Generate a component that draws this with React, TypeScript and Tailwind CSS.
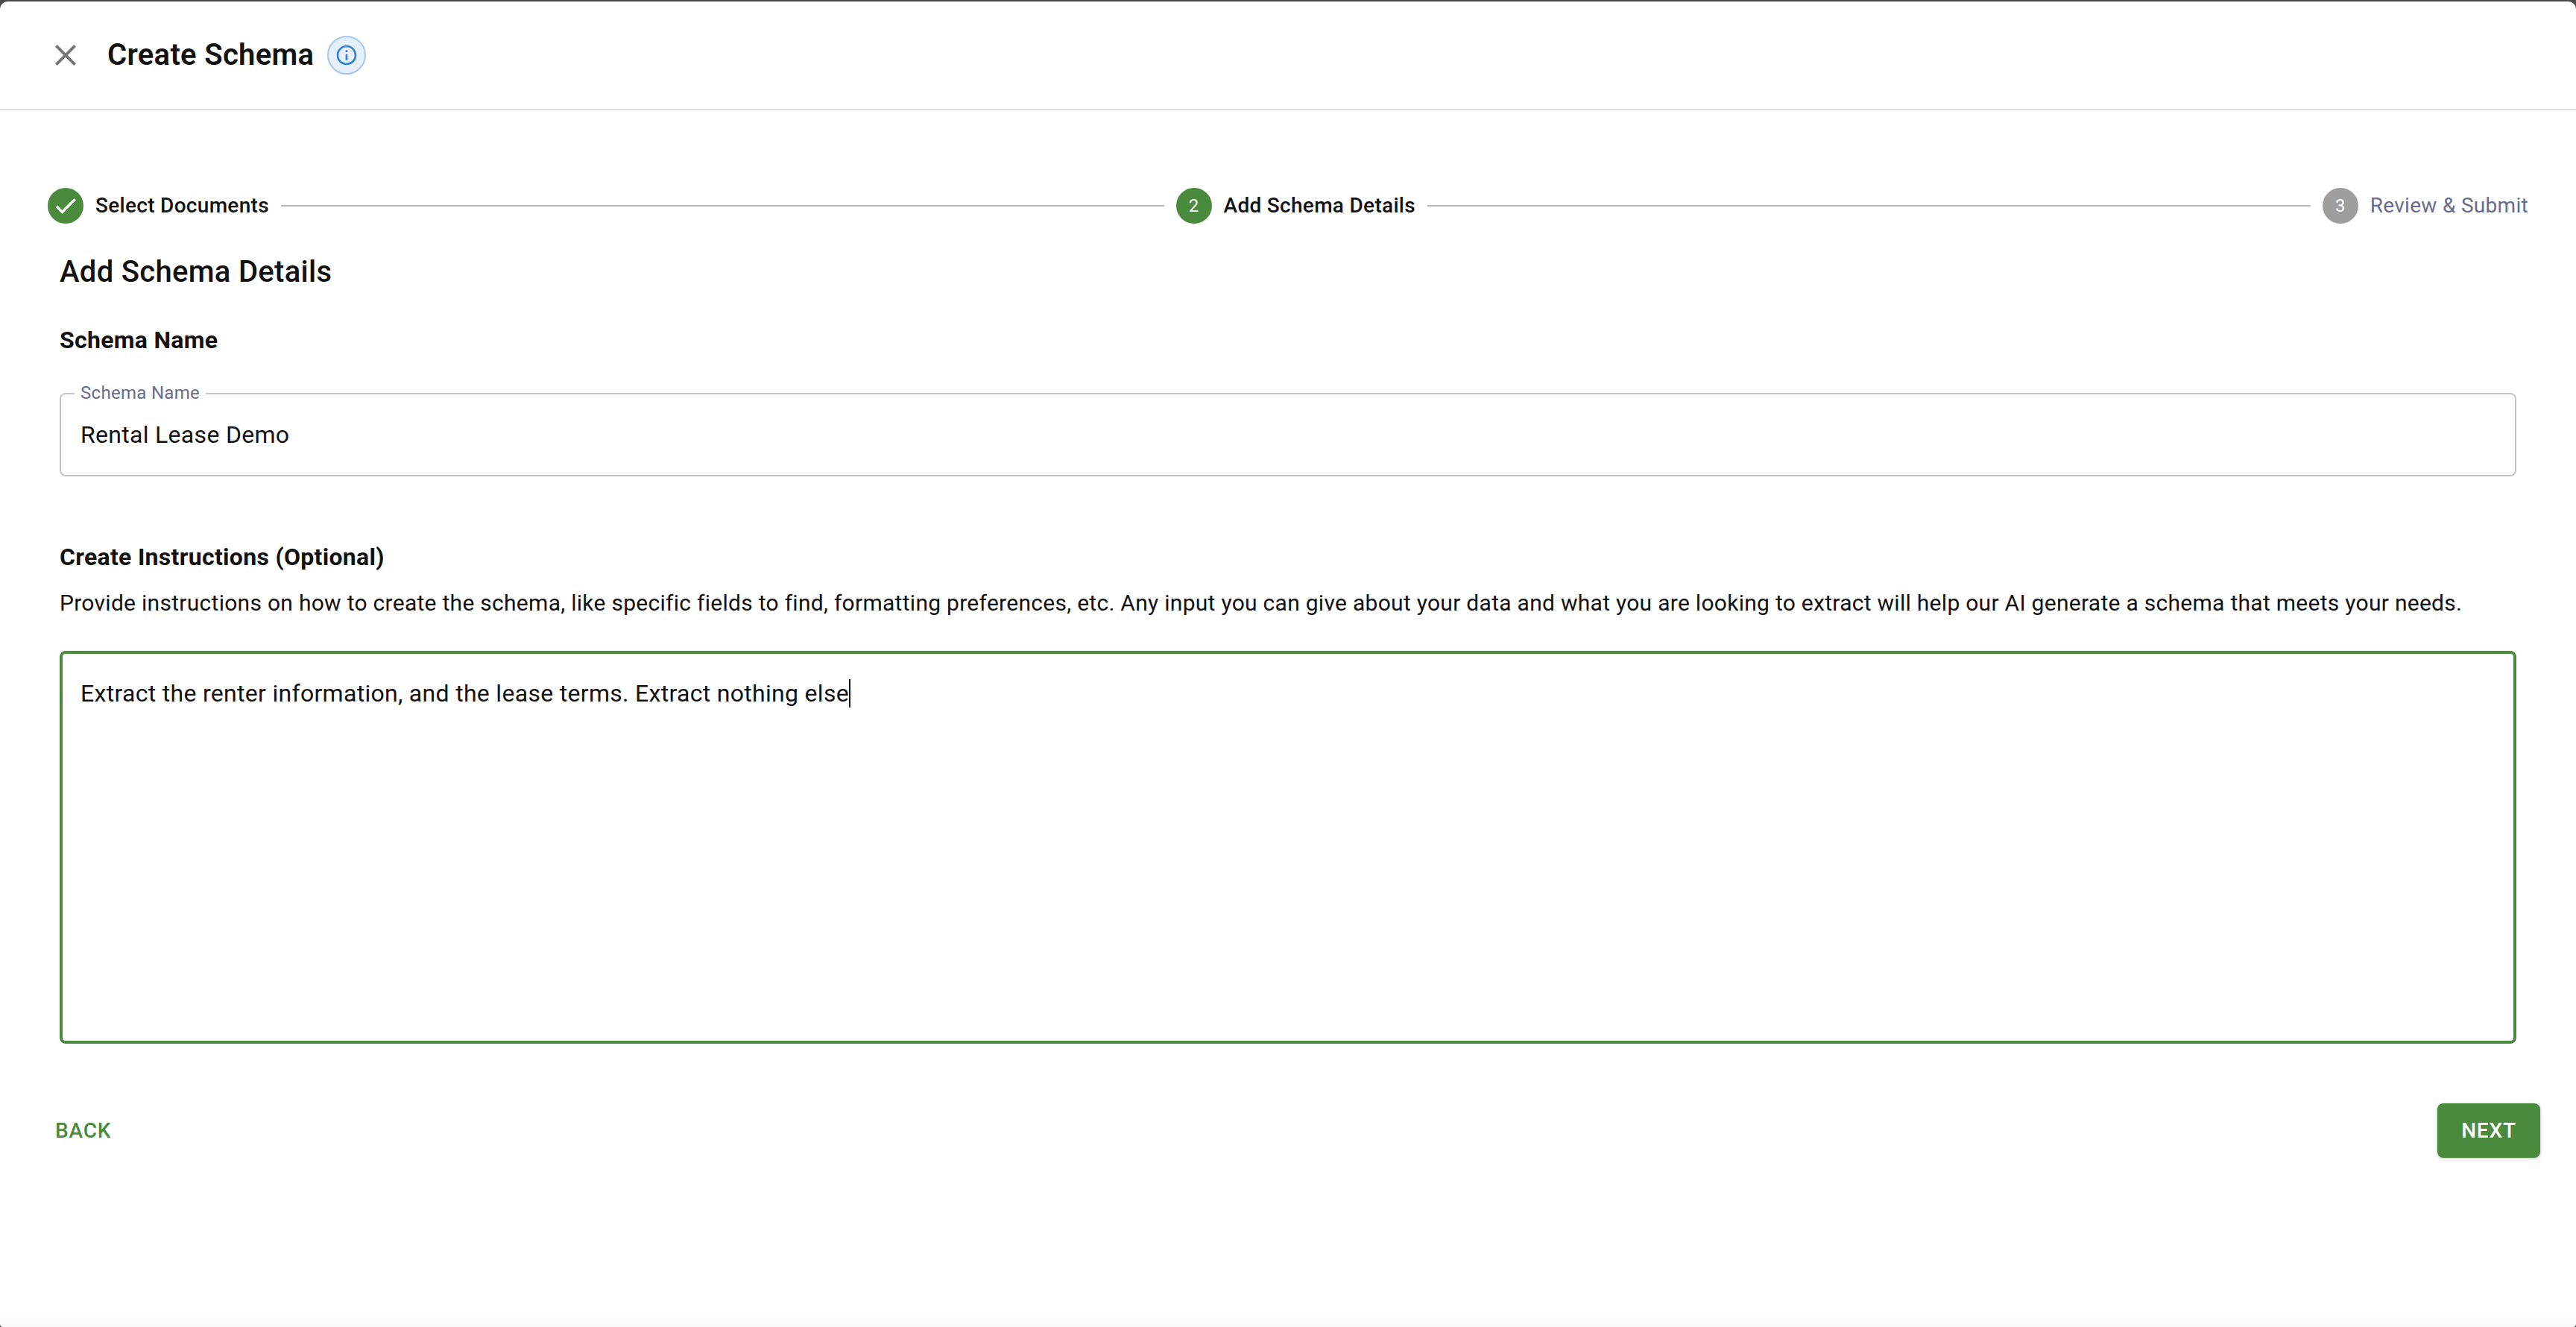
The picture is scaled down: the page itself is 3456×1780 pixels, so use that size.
const STEP_LINE = 'h-[2px] flex-1 bg-[#b8b8b8] mx-[16px]';

function StepLabel({ children, muted }: { children: string; muted?: boolean }) {
  return (
    <span className={`ml-[16px] text-[28px] leading-[48px] tracking-[0.3px] ${muted ? 'text-[#666c8f]' : 'text-[#121212] font-medium'}`}>
      {children}
    </span>
  );
}

export default function App() {
  return (
    <div className="w-[3456px] h-[1780px] bg-[#4a4a4a] pt-[2px] overflow-hidden text-[#121212] font-['Roboto',sans-serif]">
      <div className="h-[1778px] rounded-t-[10px] rounded-b-[4px] bg-[linear-gradient(to_bottom,#ffffff_98.5%,#fafafa_100%)]">
        {/* Header */}
        <header className="h-[146px] border-b-2 border-[#e0e0e0] flex items-start pl-[64px] pt-[48px]">
          <button className="w-[48px] h-[48px] text-[#757575]">
            <svg viewBox="0 0 24 24" className="w-[48px] h-[48px]" fill="currentColor">
              <path d="M19 6.41 17.59 5 12 10.59 6.41 5 5 6.41 10.59 12 5 17.59 6.41 19 12 13.41 17.59 19 19 17.59 13.41 12z" />
            </svg>
          </button>
          <h1 className="ml-[32px] text-[40px] leading-[48px] font-semibold tracking-[0.3px]">Create Schema</h1>
          <div className="ml-[18px] -mt-[2px] w-[52px] h-[52px] rounded-full bg-[#e6f0fa] border-2 border-[#a3c8ec] flex items-center justify-center text-[#2f7fd6]">
            <svg viewBox="0 0 24 24" className="w-[32px] h-[32px]" fill="currentColor">
              <path d="M11 7h2v2h-2zm0 4h2v6h-2zm1-9C6.48 2 2 6.48 2 12s4.48 10 10 10 10-4.48 10-10S17.52 2 12 2m0 18c-4.41 0-8-3.59-8-8s3.59-8 8-8 8 3.59 8 8-3.59 8-8 8" />
            </svg>
          </div>
        </header>

        {/* Stepper */}
        <div className="flex items-center px-[64px] mt-[104px]">
          <div className="w-[48px] h-[48px] rounded-full bg-[#4a8a3c] flex items-center justify-center text-white">
            <svg viewBox="0 0 24 24" className="w-[36px] h-[36px]" fill="currentColor" stroke="currentColor" strokeWidth="0.6">
              <path d="M9 16.17 4.83 12l-1.42 1.41L9 19 21 7l-1.41-1.41z" />
            </svg>
          </div>
          <StepLabel>Select Documents</StepLabel>
          <div className={STEP_LINE} />
          <div className="w-[48px] h-[48px] rounded-full bg-[#4a8a3c] flex items-center justify-center text-white text-[24px]">2</div>
          <StepLabel>Add Schema Details</StepLabel>
          <div className={STEP_LINE} />
          <div className="w-[48px] h-[48px] rounded-full bg-[#9e9e9e] flex items-center justify-center text-white text-[24px]">3</div>
          <StepLabel muted>Review &amp; Submit</StepLabel>
        </div>

        {/* Form */}
        <div className="px-[80px]">
          <h2 className="mt-[41px] text-[40px] leading-[48px] font-medium tracking-[0.3px]">Add Schema Details</h2>

          <h3 className="mt-[47px] text-[32px] leading-[40px] font-bold tracking-[0.3px]">Schema Name</h3>
          <fieldset className="mt-[40px] h-[123px] border-2 border-[#c4c4c4] rounded-[8px] px-[18px]">
            <legend className="px-[8px] text-[24px] leading-[24px] tracking-[0.3px] text-[#666c8f] -translate-y-[1px]">Schema Name</legend>
            <input
              readOnly
              value="Rental Lease Demo"
              className="w-full h-[86px] px-[8px] text-[32px] tracking-[0.3px] text-[#121212] outline-none bg-transparent"
            />
          </fieldset>

          <h3 className="mt-[88px] text-[32px] leading-[40px] font-bold tracking-[0.3px]">Create Instructions (Optional)</h3>
          <p className="mt-[20px] text-[30px] leading-[44px] tracking-[0.28px] whitespace-nowrap">
            Provide instructions on how to create the schema, like specific fields to find, formatting preferences, etc. Any input you can give about your data and what you are looking to extract will help our AI generate a schema that meets your needs.
          </p>

          <div className="mt-[42px] h-[527px] border-4 border-[#4a8a3c] rounded-[8px] px-[24px] pt-[29px] text-[32px] leading-[48px] tracking-[0.3px]">
            Extract the renter information, and the lease terms. Extract nothing else
            <span className="inline-block w-[2px] h-[38px] bg-[#121212] align-[-8px]" />
          </div>
        </div>

        {/* Actions */}
        <div className="mt-[80px] flex items-center justify-between pl-[74px] pr-[48px]">
          <button className="text-[28px] font-medium text-[#4a8a3c] tracking-[0.8px]">BACK</button>
          <button className="w-[138px] h-[73px] rounded-[8px] bg-[#4a8a3c] text-white text-[28px] font-medium tracking-[0.8px] shadow-[0_1px_4px_rgba(0,0,0,0.25)]">
            NEXT
          </button>
        </div>
      </div>
    </div>
  );
}
